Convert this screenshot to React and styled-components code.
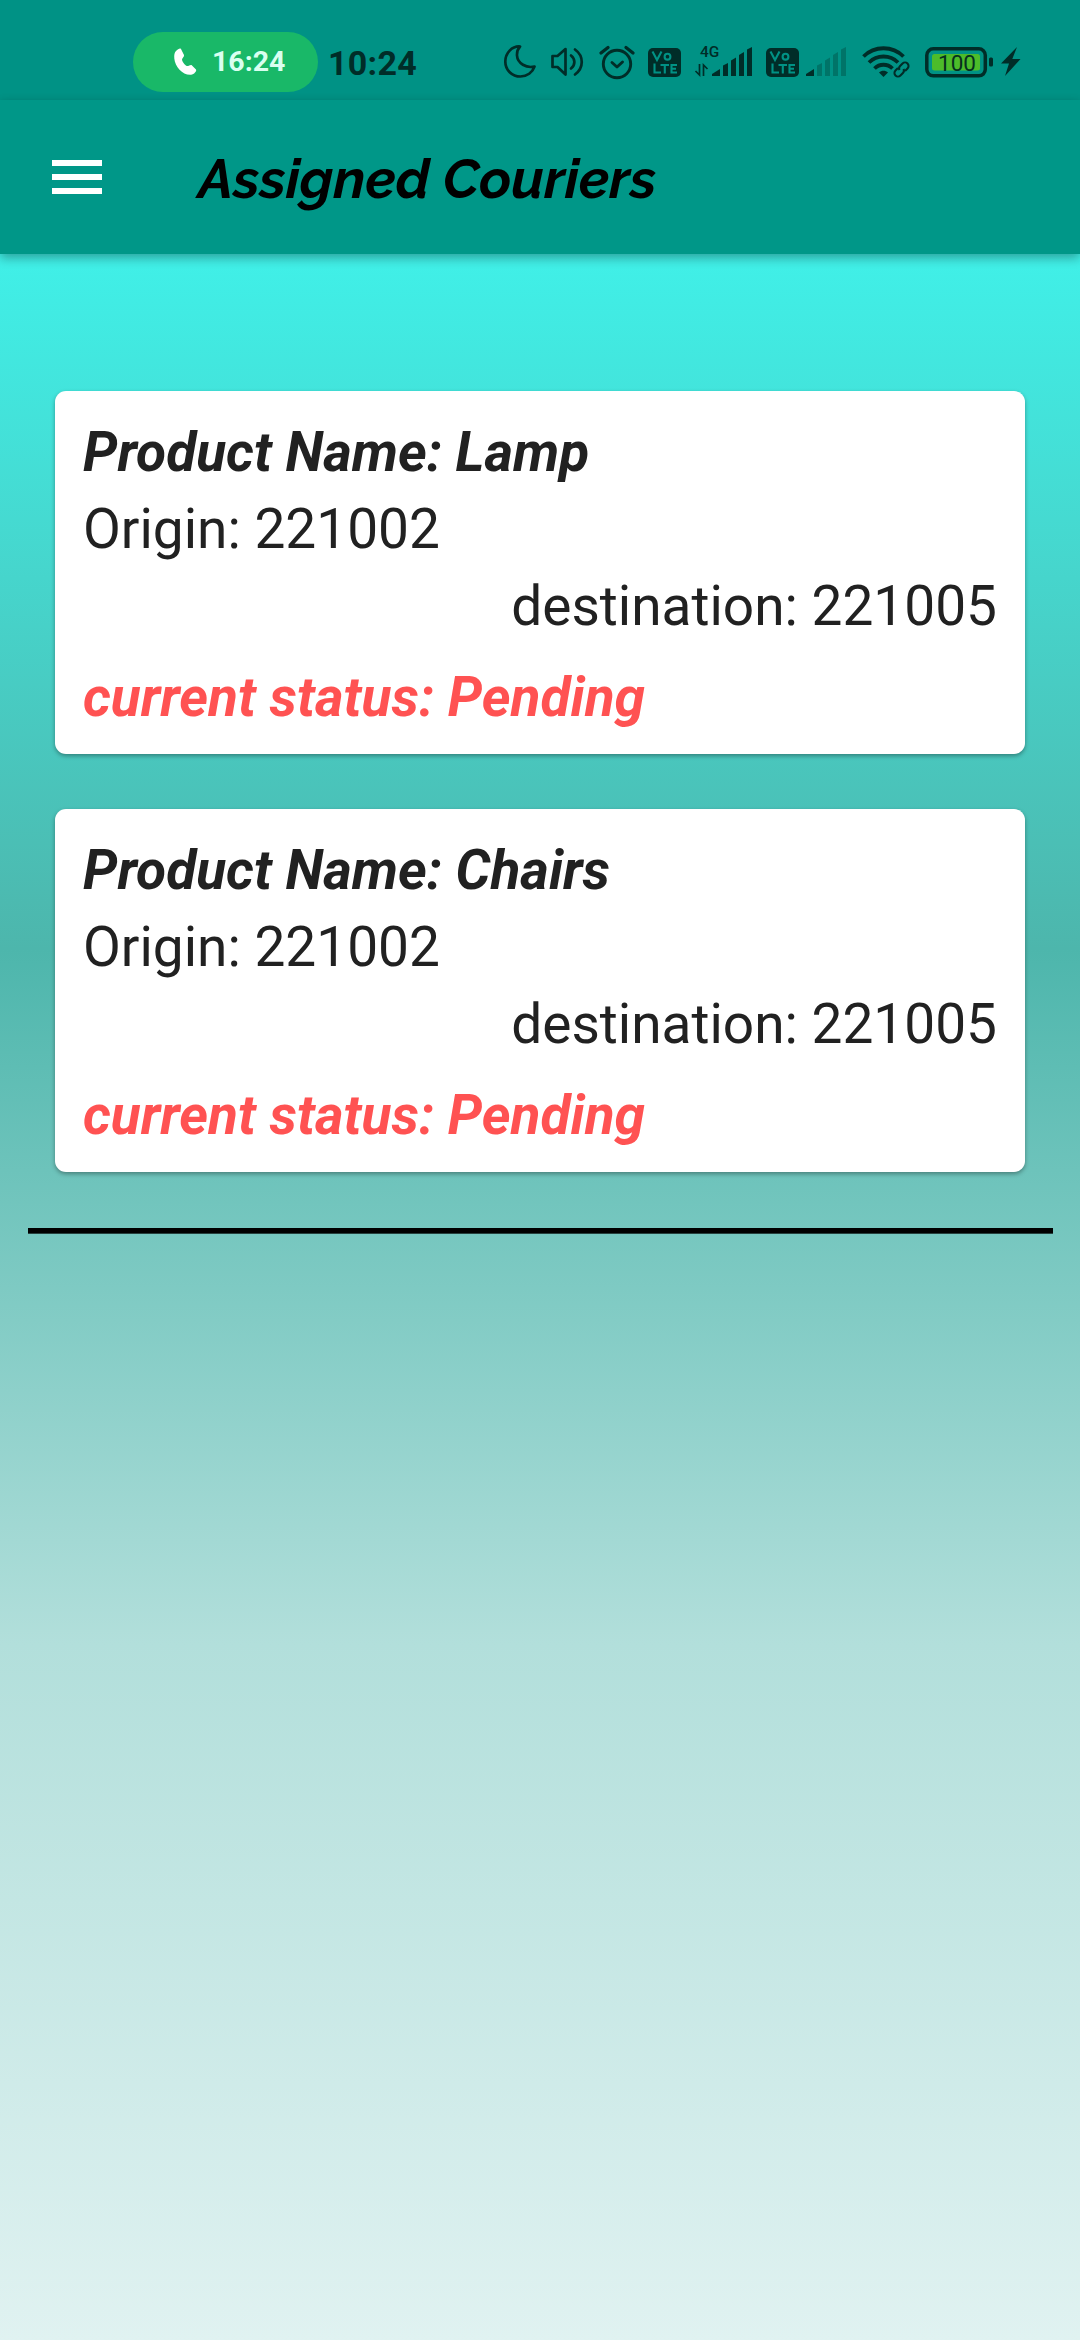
import React from "react";
import styled, { createGlobalStyle } from "styled-components";

const INK = "#002d28";

const Global = createGlobalStyle`
  * { box-sizing: border-box; }
  body { margin: 0; font-family: Roboto, "Noto Sans", sans-serif; }
`;

const Screen = styled.div`
  width: 1080px;
  height: 2340px;
  display: flex;
  flex-direction: column;
  overflow: hidden;
`;

const StatusBar = styled.header`
  height: 100px;
  flex: none;
  display: flex;
  align-items: flex-start;
  background: #009285;
  color: ${INK};
  padding: 32px 0 0 133px;
`;

const CallPill = styled.div`
  width: 185px;
  height: 60px;
  flex: none;
  border-radius: 30px;
  background: #19b868;
  color: #d9fff0;
  display: flex;
  align-items: center;
  padding-left: 41px;
  gap: 16px;
`;

const CallTime = styled.span`
  font-size: 28.5px;
  font-weight: 700;
  line-height: 60px;
`;

const Clock = styled.span`
  width: 90px;
  margin-left: 10px;
  font-size: 34px;
  font-weight: 700;
  line-height: 62px;
  letter-spacing: 0.3px;
  white-space: nowrap;
`;

const StatusIcons = styled.div`
  display: flex;
  align-items: flex-start;
  margin-left: 86px;
`;

const Glyph = styled.svg`
  display: block;
  flex: none;
  overflow: visible;
  margin-left: ${(p) => p.$gap || 0}px;
`;

const AppBar = styled.div`
  height: 154px;
  flex: none;
  display: flex;
  align-items: center;
  background: #009788;
  padding-left: 52px;
  box-shadow: 0 4px 10px rgba(0, 0, 0, 0.32);
  z-index: 1;
`;

const MenuButton = styled.button`
  display: flex;
  flex-direction: column;
  gap: 8px;
  width: 50px;
  padding: 0;
  border: 0;
  background: none;
`;

const MenuBar = styled.span`
  height: 6px;
  background: #fff;
`;

const Title = styled.h1`
  margin: 4px 0 0 96px;
  font-family: Raleway, Lato, sans-serif;
  font-size: 55px;
  font-weight: 700;
  font-style: italic;
  line-height: 66px;
  color: #000;
  white-space: nowrap;
`;

const Body = styled.main`
  flex: 1;
  display: flex;
  flex-direction: column;
  padding: 137px 27px 0 28px;
  background: linear-gradient(#40f0e8 0%, #4db6ac 33.33%, #b2dfdb 66.67%, #e0f2f1 100%);
`;

const CourierList = styled.section`
  display: flex;
  flex-direction: column;
  gap: 55px;
  padding: 0 28px 0 27px;
`;

const Card = styled.article`
  height: 363px;
  display: flex;
  flex-direction: column;
  background: #fff;
  border-radius: 11px;
  padding: 23px 28px 0;
  box-shadow: 0 2px 4px rgba(0, 0, 0, 0.34);
`;

const Line = styled.p`
  margin: ${(p) => p.$top || 0}px 0 0;
  font-size: 55px;
  line-height: 77px;
  color: ${(p) => p.$color || "#212121"};
  font-weight: ${(p) => (p.$strong ? 700 : 400)};
  font-style: ${(p) => (p.$strong ? "italic" : "normal")};
  text-align: ${(p) => (p.$end ? "right" : "left")};
  white-space: nowrap;
`;

const Divider = styled.hr`
  width: 1025px;
  height: 5.5px;
  margin: 56px 0 0;
  border: 0;
  border-bottom: 1px solid #27403d;
  height: 6px;
  background: #000;
`;

const couriers = [
  { name: "Lamp", origin: "221002", destination: "221005", status: "Pending" },
  { name: "Chairs", origin: "221002", destination: "221005", status: "Pending" },
];

function Phone() {
  return (
    <Glyph width="22" height="28" viewBox="0 0 22 28">
      <path
        d="M2 3C4 1 6 0 7 1l3 6c.6 1.500-2 3-2 4.500 0 2 3 6 5 6.500 1.500.3 3-1.500 4.500-1L22 21.500c1 1.500-2 5-5 5.300C9 27.500 1 19 .3 10.500 0 7 .5 4.500 2 3Z"
        fill="#fff"
      />
    </Glyph>
  );
}

function Moon() {
  return (
    <Glyph width="32" height="33" viewBox="0 0 32 33">
      <path
        d="M16 1.500C8 1 1.300 8 1.300 16.500S8 31.500 16.500 31.500c6.500 0 12-4 14-10-8 2-17-3-17.500-11-.2-4 .7-6.500 3-9Z"
        fill="none" stroke={INK} strokeWidth="2.700" strokeLinejoin="round"
      />
    </Glyph>
  );
}

function Speaker() {
  return (
    <Glyph $gap={15} width="32" height="32" viewBox="0 0 32 32">
      <g fill="none" stroke={INK} strokeWidth="2.700" strokeLinejoin="round" strokeLinecap="round">
        <path d="M1.500 10v11h5L14.500 28.500V3l-8 7Z" />
        <path d="M20 9.500c4.500 3.500 4.500 9.500 0 13M24 3.500c9 6.500 9 18.500 0 25" />
      </g>
    </Glyph>
  );
}

function Alarm() {
  return (
    <Glyph $gap={16} width="36" height="34" viewBox="0 0 36 34">
      <g fill="none" stroke={INK} strokeWidth="2.900" strokeLinecap="round" strokeLinejoin="round">
        <circle cx="18" cy="19" r="13.700" />
        <path d="M13 17.500l5 4.500 5.500-5" />
        <path d="M2 8l7-5.500M34 8l-7-5.500" strokeWidth="3.300" />
      </g>
    </Glyph>
  );
}

function VoLte({ gap }) {
  return (
    <Glyph $gap={gap} width="33" height="29" viewBox="0 0 33 29">
      <rect width="33" height="29" rx="5" fill={INK} />
      <g fill="none" stroke="#009285" strokeWidth="2.100">
        <path d="M4.500 3.500l4.500 8.500 4.500-8.500" />
        <circle cx="19.500" cy="8.700" r="2.900" />
        <path d="M6.500 15.500v9H13M12.500 17h8.500M16.800 17v8.500M29 17h-5.500v7.500H29M23.500 20.800H28" />
      </g>
    </Glyph>
  );
}

function Signal({ network, level, gap }) {
  const bars = [
    "M0 29v-2l8-5v7Z",
    "M11 29V18.500l5-2.500v13Z",
    "M19 29V13.500l5-3v18.500Z",
    "M27 29V8l5-3v24Z",
    "M35 29V2.500L40 0v29Z",
  ];
  return (
    <Glyph $gap={gap} width="40" height="29" viewBox="0 0 40 29">
      {bars.map((d, i) => (
        <path key={d} d={d} fill={INK} opacity={i < level ? 1 : 0.3} />
      ))}
      {network && (
        <>
          <text x="-12" y="9.500" fontFamily="Roboto, sans-serif" fontSize="15.500" fontWeight="500" fill={INK}>
            {network}
          </text>
          <path d="M-12.500 17v11l-4-4M-8.500 29V18l4 4" fill="none" stroke={INK} strokeWidth="1.700" />
        </>
      )}
    </Glyph>
  );
}

function Wifi() {
  return (
    <Glyph $gap={16} width="48" height="32" viewBox="0 0 48 32">
      <g fill="none" stroke={INK} strokeWidth="3.800">
        <path d="M1.500 10.500c11-11 29-11 40 0" />
        <path d="M7 16.500c8-8 21-8 29 0" />
        <path d="M12.500 22.500c5-5 13-5 18 0" />
      </g>
      <path d="M17 26.500c2.500-2.500 6.500-2.500 9 0L21.500 31Z" fill={INK} />
      <g fill="none" stroke={INK} strokeWidth="2.100" transform="rotate(-45 39.500 23.500)">
        <path d="M38 20h-3.500a3.500 3.500 0 0 0 0 7H38a3.500 3.500 0 0 0 3.300-2.500M41 27h3.500a3.500 3.500 0 0 0 0-7H41a3.500 3.500 0 0 0-3.300 2.500" />
      </g>
    </Glyph>
  );
}

function Battery() {
  return (
    <Glyph $gap={15} width="68" height="31" viewBox="0 0 68 31">
      <rect x="1.800" y="1.800" width="58.500" height="27" rx="6.500" fill="none" stroke={INK} strokeWidth="3.500" />
      <rect x="7" y="7" width="48" height="16.500" rx="2.500" fill="#4cbc2a" />
      <rect x="64" y="10.500" width="4" height="9" rx="1.500" fill={INK} />
      <text x="32" y="23.500" textAnchor="middle" fontFamily="Roboto, sans-serif" fontSize="22.500" fill="#06301f">
        100
      </text>
    </Glyph>
  );
}

function Bolt() {
  return (
    <Glyph $gap={8} width="20" height="29" viewBox="0 0 20 29">
      <path d="M16 0L0 16.500h8L4 29 19.500 12h-8.200Z" fill={INK} />
    </Glyph>
  );
}

const IconSlot = styled.span`
  display: flex;
  padding-top: ${(p) => p.$top}px;
`;

function CourierCard({ courier }) {
  return (
    <Card>
      <Line $strong>Product Name: {courier.name}</Line>
      <Line>Origin: {courier.origin}</Line>
      <Line $end>destination: {courier.destination}</Line>
      <Line $strong $top={14} $color="#ff5252">current status: {courier.status}</Line>
    </Card>
  );
}

export default function App() {
  return (
    <Screen>
      <Global />
      <StatusBar>
        <CallPill>
          <Phone />
          <CallTime>16:24</CallTime>
        </CallPill>
        <Clock>10:24</Clock>
        <StatusIcons>
          <IconSlot $top={13}><Moon /></IconSlot>
          <IconSlot $top={14}><Speaker /></IconSlot>
          <IconSlot $top={13}><Alarm /></IconSlot>
          <IconSlot $top={16}><VoLte gap={13} /></IconSlot>
          <IconSlot $top={15}><Signal gap={31} level={5} network="4G" /></IconSlot>
          <IconSlot $top={16}><VoLte gap={14} /></IconSlot>
          <IconSlot $top={15}><Signal gap={7} level={1} /></IconSlot>
          <IconSlot $top={14}><Wifi /></IconSlot>
          <IconSlot $top={15}><Battery /></IconSlot>
          <IconSlot $top={15}><Bolt /></IconSlot>
        </StatusIcons>
      </StatusBar>
      <AppBar>
        <MenuButton aria-label="Menu">
          <MenuBar />
          <MenuBar />
          <MenuBar />
        </MenuButton>
        <Title>Assigned Couriers</Title>
      </AppBar>
      <Body>
        <CourierList>
          {couriers.map((c) => (
            <CourierCard key={c.name} courier={c} />
          ))}
        </CourierList>
        <Divider />
      </Body>
    </Screen>
  );
}
